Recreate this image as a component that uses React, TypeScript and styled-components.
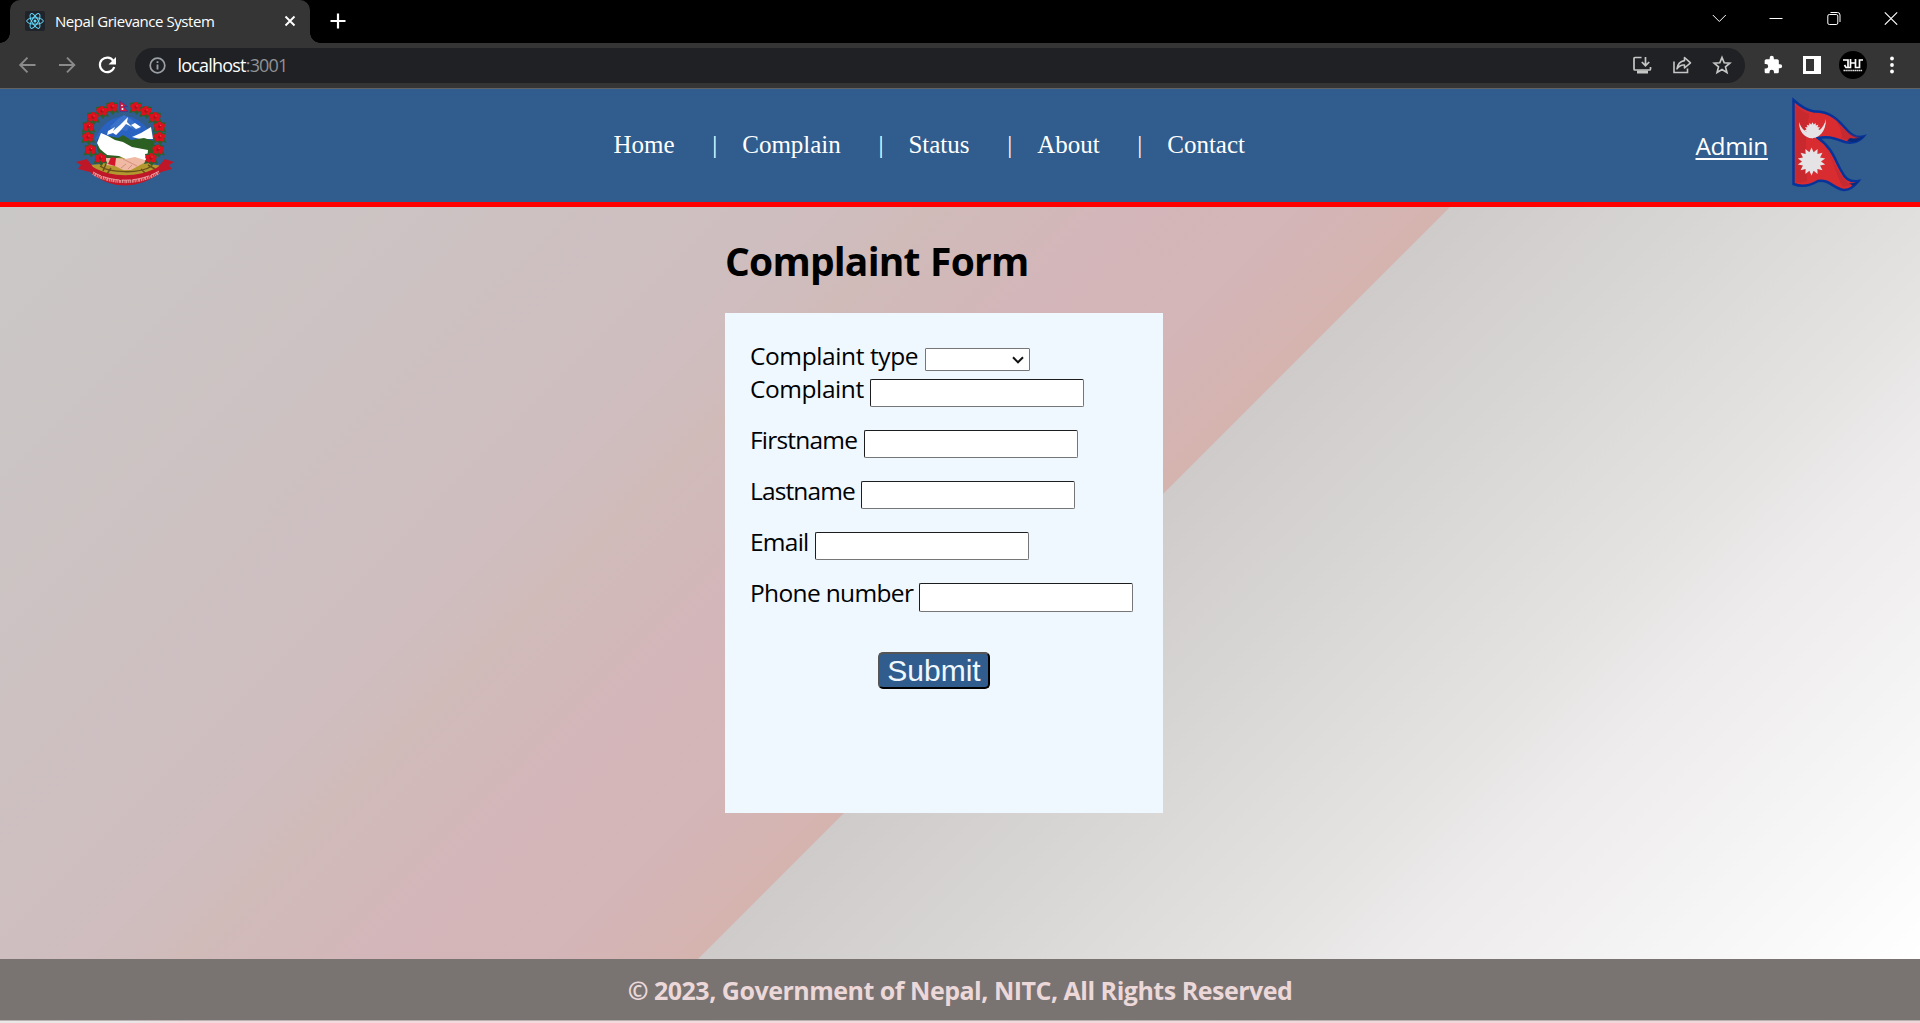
import React from "react";
import styled, { createGlobalStyle } from "styled-components";

const sans = `"Segoe UI", "Open Sans", "Noto Sans", sans-serif`;

const GlobalStyle = createGlobalStyle`
  * { box-sizing: border-box; }
  html, body { margin: 0; padding: 0; overflow: hidden; }
  body { font-family: ${sans}; background: #fff; }
`;

const Window = styled.div`
  width: 1920px;
  height: 1023px;
  display: flex;
  flex-direction: column;
  overflow: hidden;
`;

/* Browser chrome */
const TabStrip = styled.div`
  height: 43px;
  flex: none;
  background: #000;
  display: flex;
  align-items: flex-start;
  padding-left: 10px;
`;

const Tab = styled.div`
  position: relative;
  width: 300px;
  height: 43px;
  border-radius: 10px 10px 0 0;
  background: #353535;
  display: flex;
  align-items: center;
  padding: 0 14px 2px 15px;
  &::before, &::after {
    content: "";
    position: absolute;
    bottom: 0;
    width: 10px;
    height: 10px;
  }
  &::before {
    left: -10px;
    background: radial-gradient(circle at 0 0, transparent 9.5px, #353535 10px);
  }
  &::after {
    right: -10px;
    background: radial-gradient(circle at 100% 0, transparent 9.5px, #353535 10px);
  }
`;

const Favicon = styled.svg`
  width: 20px;
  height: 20px;
  background: #20232a;
  border-radius: 2px;
`;

const TabTitle = styled.span`
  margin-left: 10px;
  width: 218px;
  flex: none;
  color: #fff;
  font-size: 15px;
  line-height: 20px;
  letter-spacing: -0.45px;
  white-space: nowrap;
`;

const TabClose = styled.svg`
  width: 12px;
  height: 12px;
  margin-left: 11px;
  flex: none;
`;

const NewTab = styled.svg`
  width: 16px;
  height: 16px;
  margin: 13px 0 0 19.5px;
`;

const WindowControls = styled.div`
  margin-left: auto;
  display: flex;
  gap: 43.5px;
  padding: 11px 22px 0 0;
  svg { width: 14px; height: 14px; display: block; }
`;

const Toolbar = styled.div`
  height: 46px;
  flex: none;
  background: #353535;
  border-bottom: 1px solid #626262;
  display: flex;
  align-items: center;
  padding: 0 16px 1px 17px;
`;

const NavButtons = styled.div`
  display: flex;
  gap: 20px;
  width: 118px;
  flex: none;
  svg { width: 20px; height: 20px; display: block; }
`;

const AddressBar = styled.div`
  width: 1610px;
  height: 35px;
  border-radius: 18px;
  background: #202124;
  display: flex;
  align-items: center;
  padding: 0 13px 0 14px;
`;

const Url = styled.span`
  margin-left: 11.5px;
  font-size: 18px;
  line-height: 24px;
  letter-spacing: -0.8px;
  color: #fff;
  white-space: nowrap;
`;

const Port = styled.span`
  color: #8f9296;
`;

const BarActions = styled.div`
  margin-left: auto;
  display: flex;
  gap: 20px;
  svg { width: 20px; height: 20px; display: block; }
`;

const ToolActions = styled.div`
  display: flex;
  align-items: center;
  margin-left: 17.5px;
`;

const ToolIcon = styled.svg<{ $size: number; $left?: number }>`
  width: ${(p) => p.$size}px;
  height: ${(p) => p.$size}px;
  margin-left: ${(p) => p.$left ?? 0}px;
  display: block;
`;

/* Site header */
const Header = styled.header`
  height: 118px;
  flex: none;
  background: #305d8d;
  border-bottom: 5px solid #f00;
  display: flex;
  align-items: flex-start;
`;

const Emblem = styled.svg`
  width: 100px;
  height: 90px;
  margin: 10px 0 0 75px;
  flex: none;
`;

const Menu = styled.nav`
  margin: 42px 0 0 438.5px;
  width: 1082px;
  flex: none;
  display: flex;
  font-family: "Times New Roman", "Liberation Serif", serif;
  font-size: 25px;
  line-height: 28px;
  color: #fff;
`;

const MenuItem = styled.a`
  color: #fff;
  text-decoration: none;
`;

const Divider = styled.span`
  margin: 0 24.9px 0 37.7px;
`;

const AdminLink = styled.a`
  color: #fff;
  font-size: 24.5px;
  line-height: 34px;
  margin-top: 40px;
  letter-spacing: -0.4px;
  text-decoration: underline;
  text-decoration-thickness: 2px;
  text-underline-offset: 3px;
  width: 72px;
  white-space: nowrap;
`;

const Flag = styled.svg`
  width: 76px;
  height: 96px;
  margin: 8px 0 0 23.5px;
  flex: none;
`;

/* Page body */
const Main = styled.main`
  height: 752px;
  flex: none;
  background: linear-gradient(
    135deg,
    #cac8c7 0px,
    #cfbdbf 589px,
    #d0bbb9 660px,
    #d3b6b9 787px,
    #d4b5b8 914px,
    #d5b4af 1025px,
    #cecbca 1025.6px,
    #e4e3e1 1414px,
    #edebec 1520px,
    #ffffff 1889px
  );
  padding-left: 725px;
`;

const Title = styled.h1`
  margin: 0;
  font-size: 39px;
  line-height: 108px;
  height: 106px;
  font-weight: 700;
  letter-spacing: -0.8px;
  word-spacing: 1px;
  color: #000;
  white-space: nowrap;
`;

const Form = styled.form`
  width: 438px;
  height: 500px;
  background: #eff7ff;
  padding: 33px 0 0 25px;
`;

const Row = styled.div<{ $height: number }>`
  height: ${(p) => p.$height}px;
  display: flex;
  align-items: flex-start;
`;

const Label = styled.label<{ $width: number; $spacing: number }>`
  width: ${(p) => p.$width}px;
  flex: none;
  font-size: 24.5px;
  line-height: 19px;
  letter-spacing: ${(p) => p.$spacing}px;
  color: #000;
  white-space: nowrap;
`;

const Select = styled.div`
  width: 105px;
  height: 23px;
  margin-top: 2px;
  border: 1px solid #767676;
  border-radius: 1px;
  background: #fff;
  display: flex;
  align-items: center;
  justify-content: flex-end;
  padding-right: 5px;
`;

const Input = styled.input`
  width: 214px;
  height: 28.2px;
  margin: 0;
  padding: 0;
  border: 1px solid;
  border-color: #1d1d1d #767676 #767676 #1d1d1d;
  border-radius: 2px;
  background: #fff;
  outline: none;
`;

const Submit = styled.button`
  display: block;
  width: 112px;
  height: 37px;
  margin: 17.5px 0 0 128px;
  padding: 1px 0 0;
  border: 2px solid;
  border-color: #555 #000 #000 #555;
  border-radius: 5px;
  background: #305d8d;
  color: #f0f8ff;
  font-family: Arial, "Liberation Sans", sans-serif;
  font-size: 30px;
  line-height: 32px;
`;

const Footer = styled.footer`
  height: 61px;
  flex: none;
  background: #797372;
  color: #ecd8d8;
  display: flex;
  justify-content: center;
  font-size: 25px;
  font-weight: 700;
  line-height: 62px;
  white-space: nowrap;
`;

const FooterText = styled.span`
  letter-spacing: -0.49px;
`;

const PageEdge = styled.div`
  height: 3px;
  flex: none;
  border-top: 1px solid #bab2b2;
  background: linear-gradient(90deg, #e8e8e7 0, #e8e6e6 130px, #f2dbde 190px, #efd6d8 100%);
`;

const fields = [
  { label: "Complaint", width: 120, spacing: -0.43 },
  { label: "Firstname", width: 114, spacing: -0.8 },
  { label: "Lastname", width: 111, spacing: -0.88 },
  { label: "Email", width: 65, spacing: -0.75 },
  { label: "Phone number", width: 169, spacing: -0.65 },
];

const flowers: [number, number][] = [
  [37, 8], [27, 12], [18, 18], [13.5, 27.5], [13, 38], [15.5, 50.5], [25.5, 59],
  [61, 8], [71, 12], [80, 18], [84.5, 27.5], [84.5, 38], [83, 50.5], [76, 59],
];

const petals: [number, number][] = [
  [0, -3.1], [3.3, -1], [2.5, 2.7], [-2.5, 2.7], [-3.3, -1],
];

function starPoints(cx: number, cy: number, outer: number, inner: number, count: number) {
  return Array.from({ length: count * 2 }, (_, i) => {
    const r = i % 2 ? inner : outer;
    const a = (Math.PI * i) / count - Math.PI / 2;
    return `${(cx + r * Math.cos(a)).toFixed(2)},${(cy + r * Math.sin(a)).toFixed(2)}`;
  }).join(" ");
}

function NepalEmblem() {
  return (
    <Emblem viewBox="0 0 100 90">
      <path d="M20 40C27 25 36 18 49 17C63 18 73 26 78 42L66 55H32Z" fill="#2a62c2" />
      <path d="M35 28L43 20L49 16L56 20L66 30L60 31L54 28L52 32L46 31L40 33Z" fill="#3a72c9" />
      <path d="M33 32L40 28L38 32L45 26L53 18L52 23L57 28L51 25L46 31L41 36L38 34L32 36ZM56 26L60 24L66 28L61 30ZM57 38L66 34L76 28L78 40H65Z" fill="#fff" />
      <path d="M22 40L34 37L43 39L48 36L56 41L69 39L79 42L80 52L72 62H29L22 51Z" fill="#2c6023" />
      <path d="M26 65C37 56 63 56 75 65L88 67C72 81 30 81 15 66Z" fill="#b2982f" />
      <path d="M26 34L33 37L40 41L48 43L57 48L73 51L72 61H53L44 57L32 56L25 50L22 44Z" fill="#fff" />
      <path d="M31 59L42 59L50 60L60 58L73 62L65 66L56 71L48 71L40 67L31 66Z" fill="#efb9a4" />
      <path d="M48 60L54 63L62 67M46 69L51 65M53 70L57 66" fill="none" stroke="#cf8a76" strokeWidth=".9" />
      <path d="M36 58L41 59L40 67L33 65Z" fill="#d3172b" />
      <path d="M25 67C34 74 65 75 77 67M31 65L28 72M36 69L32 75M66 70L71 75M73 66L80 70" stroke="#69501a" fill="none" strokeWidth="1.5" />
      <path d="M1 63L12 60L18 68C36 79 64 79 83 68L90 60L99 63L94 66L97 70L86 73C63 91 36 91 15 73L3 70L6 66Z" fill="#bf1728" />
      <path d="M18 74.500C37 85.500 64 85.500 84 73.500" stroke="#e9a3a3" strokeWidth="3" strokeDasharray="1 .7 2 .8 1.3 .6" fill="none" opacity=".8" />
      <path d="M18 73C37 84 64 84 84 72" stroke="#efc0c0" strokeWidth=".7" fill="none" strokeDasharray="9 2 17 2" />
      {flowers.map(([x, y], i) => (
        <g key={i} transform={`translate(${x} ${y})`}>
          <path d="M-7 6L-5 1L-6 -4L0 -5L6 -4L5 1L7 6L3 5L1 8L-2 5Z" fill="#2d602b" />
          {petals.map(([px, py], j) => (
            <circle key={j} cx={px} cy={py * 0.85} r="2.3" fill="#dc101e" />
          ))}
          <circle r="1.600" fill="#b60c18" />
          <circle cx="1" cy="-1" r=".7" fill="#f04850" />
        </g>
      ))}
      <path d="M45 2L52.500 7.500H48.500L53 12.500H45Z" fill="#d9183b" stroke="#2438a0" strokeWidth=".6" />
      <circle cx="47" cy="6.500" r=".8" fill="#fff" />
      <circle cx="47.500" cy="10" r="1" fill="#fff" />
    </Emblem>
  );
}

function NepalFlag() {
  return (
    <Flag viewBox="0 0 76 96">
      <path
        d="M2.500 3C8 8 14 13 23 14.500C40 14 48 24 56 33C61 39 67 41 72.500 39.500C67 46 58 47 51 44C42 41 37 39 27 41C42 51 45 66 51 75C55 84 62 85 67.500 84C62 91 56 95 49 92C41 89 36 82 27 84C17 90 10 90 2.500 87Z"
        fill="#d92c30"
        stroke="#07349a"
        strokeWidth="2.500"
      />
      <path d="M4.500 8C8 12 13 15 18 17L15 44L16 84C11 86 8 86 4.500 85Z" fill="#bd2830" opacity=".65" />
      <path d="M42 18C49 28 57 39 70 40.500C63 45 57 44 51 41C51 32 46 25 42 18ZM35 51C44 66 48 80 60 88L52 90C45 78 43 64 35 51Z" fill="#ad2635" opacity=".45" />
      <path d="M59 41C64 42 68 41 74 39L67 44C63 46 60 45 56 44ZM58 86C63 87 66 85 69 84L62 89Z" fill="#072a7c" />
      <path d="M8 25C8 47 35 47 35 22C31 39 13 41 8 25Z" fill="#e6e3e6" />
      <polygon points={starPoints(21.5, 33.5, 8.2, 6, 16)} fill="#e6e3e6" />
      <polygon points={starPoints(20.5, 64.5, 14, 9.5, 14)} fill="#e6e3e6" />
    </Flag>
  );
}

export default function App() {
  return (
    <Window>
      <GlobalStyle />
      <TabStrip>
        <Tab>
          <Favicon viewBox="0 0 20 20" fill="none" stroke="#61dafb" strokeWidth="1">
            <ellipse cx="10" cy="10" rx="8.300" ry="3.200" />
            <ellipse cx="10" cy="10" rx="8.300" ry="3.200" transform="rotate(60 10 10)" />
            <ellipse cx="10" cy="10" rx="8.300" ry="3.200" transform="rotate(120 10 10)" />
            <circle cx="10" cy="10" r="1.500" fill="#61dafb" stroke="none" />
          </Favicon>
          <TabTitle>Nepal Grievance System</TabTitle>
          <TabClose viewBox="0 0 12 12">
            <path d="M1.500 1.500L10.500 10.500M10.500 1.500L1.500 10.500" stroke="#fff" strokeWidth="1.900" />
          </TabClose>
        </Tab>
        <NewTab viewBox="0 0 16 16">
          <path d="M8 .5V15.500M.5 8H15.500" stroke="#fff" strokeWidth="2.200" />
        </NewTab>
        <WindowControls>
          <svg viewBox="0 0 14 14"><path d="M.8 4L7.300 10.500L13.800 4" fill="none" stroke="#fff" /></svg>
          <svg viewBox="0 0 14 14"><path d="M.5 7.500H13.500" stroke="#fff" /></svg>
          <svg viewBox="0 0 14 14" fill="none" stroke="#fff">
            <rect x=".8" y="3.500" width="10" height="10" rx="1.500" />
            <path d="M3.500 1.500H10.500Q13 1.500 13 4V11" />
          </svg>
          <svg viewBox="0 0 14 14"><path d="M.8 1.300L13.200 13.700M13.200 1.300L.8 13.700" stroke="#fff" strokeWidth="1.100" /></svg>
        </WindowControls>
      </TabStrip>
      <Toolbar>
        <NavButtons>
          <svg viewBox="0 0 20 20" fill="none" stroke="#8b8b8b" strokeWidth="1.900"><path d="M18.500 10H3.500M10.500 2.700L3.200 10L10.500 17.300" /></svg>
          <svg viewBox="0 0 20 20" fill="none" stroke="#8b8b8b" strokeWidth="1.900"><path d="M2 10H17M10 2.700L17.300 10L10 17.300" /></svg>
          <svg viewBox="0 0 20 20">
            <path d="M16.300 5.800A7.300 7.300 0 1 0 17.200 12" fill="none" stroke="#fff" strokeWidth="2.200" />
            <path d="M19 2V9.500H11.500Z" fill="#fff" />
          </svg>
        </NavButtons>
        <AddressBar>
          <ToolIcon $size={17} viewBox="0 0 17 17" fill="none" stroke="#9aa0a6">
            <circle cx="8.500" cy="8.500" r="7.300" strokeWidth="1.700" />
            <path d="M8.500 7.500V12.500M8.500 4.300V6.100" strokeWidth="1.800" />
          </ToolIcon>
          <Url>localhost<Port>:3001</Port></Url>
          <BarActions>
            <svg viewBox="0 0 20 20" fill="none" stroke="#c4c7c5" strokeWidth="1.700">
              <path d="M9.500 2.500H3Q2 2.500 2 3.500V14Q2 15 3 15H17.500Q18.500 15 18.500 14V12" />
              <path d="M13.500 2V10M9.800 7L13.500 10.700L17.200 7" />
              <path d="M5 17H16" strokeWidth="3" />
            </svg>
            <svg viewBox="0 0 20 20" fill="none" stroke="#c4c7c5" strokeWidth="1.600">
              <path d="M2 6.500V17.500H15.500V13.500" />
              <path d="M12.500 2.500L18.500 7.800L12.500 13V10Q8 9.500 5 13.800Q6 6.500 12.500 5.600Z" strokeLinejoin="round" />
            </svg>
            <svg viewBox="0 0 20 20" fill="none" stroke="#c4c7c5" strokeWidth="1.700">
              <path d="M10 2.500L12.200 7.800L17.800 8.200L13.500 11.900L14.900 17.400L10 14.500L5.100 17.400L6.500 11.900L2.200 8.200L7.800 7.800Z" />
            </svg>
          </BarActions>
        </AddressBar>
        <ToolActions>
          <ToolIcon $size={20} viewBox="0 0 24 24" fill="#fff">
            <path d="M20.500 11H19V7c0-1.100-.9-2-2-2h-4V3.500a2.500 2.500 0 0 0-5 0V5H4c-1.100 0-2 .9-2 2v3.800h1.500a2.700 2.700 0 0 1 0 5.400H2V20c0 1.100.9 2 2 2h3.800v-1.500a2.700 2.700 0 0 1 5.400 0V22H17c1.100 0 2-.9 2-2v-4h1.500a2.500 2.500 0 0 0 0-5z" />
          </ToolIcon>
          <ToolIcon $size={18} $left={20.5} viewBox="0 0 18 18">
            <path d="M0 0H18V18H0ZM3 3V15H11V3Z" fill="#fff" fillRule="evenodd" />
          </ToolIcon>
          <ToolIcon $size={28} $left={17.5} viewBox="0 0 28 28">
            <circle cx="14" cy="14" r="14" fill="#000" />
            <path d="M4 9H9V16.500H7L5.500 14M11.500 8V16.500H9M11.500 12H16.500M16.500 8V16.500H20.500V9H24" fill="none" stroke="#fff" strokeWidth="1.700" />
            <path d="M4.500 19.500H23.500" stroke="#ddd" strokeWidth="1.600" strokeDasharray="1.500 .4" />
          </ToolIcon>
          <ToolIcon $size={20} $left={15.5} viewBox="0 0 20 20" fill="#fff">
            <circle cx="10" cy="3.500" r="1.900" /><circle cx="10" cy="10" r="1.900" /><circle cx="10" cy="16.500" r="1.900" />
          </ToolIcon>
        </ToolActions>
      </Toolbar>

      <Header>
        <NepalEmblem />
        <Menu>
          {["Home", "Complain", "Status", "About", "Contact"].map((item, i) => (
            <React.Fragment key={item}>
              {i > 0 && <Divider>|</Divider>}
              <MenuItem>{item}</MenuItem>
            </React.Fragment>
          ))}
        </Menu>
        <AdminLink>Admin</AdminLink>
        <NepalFlag />
      </Header>

      <Main>
        <Title>Complaint Form</Title>
        <Form>
          <Row $height={33}>
            <Label $width={175} $spacing={-0.4}>Complaint type</Label>
            <Select>
              <svg width="12" height="8" viewBox="0 0 12 8">
                <path d="M1 1.300L6 6.300L11 1.300" fill="none" stroke="#111" strokeWidth="2" />
              </svg>
            </Select>
          </Row>
          {fields.map((f) => (
            <Row key={f.label} $height={51.1}>
              <Label $width={f.width} $spacing={f.spacing}>{f.label}</Label>
              <Input type="text" />
            </Row>
          ))}
          <Submit type="button">Submit</Submit>
        </Form>
      </Main>

      <Footer><FooterText>© 2023, Government of Nepal, NITC, All Rights Reserved</FooterText></Footer>
      <PageEdge />
    </Window>
  );
}
